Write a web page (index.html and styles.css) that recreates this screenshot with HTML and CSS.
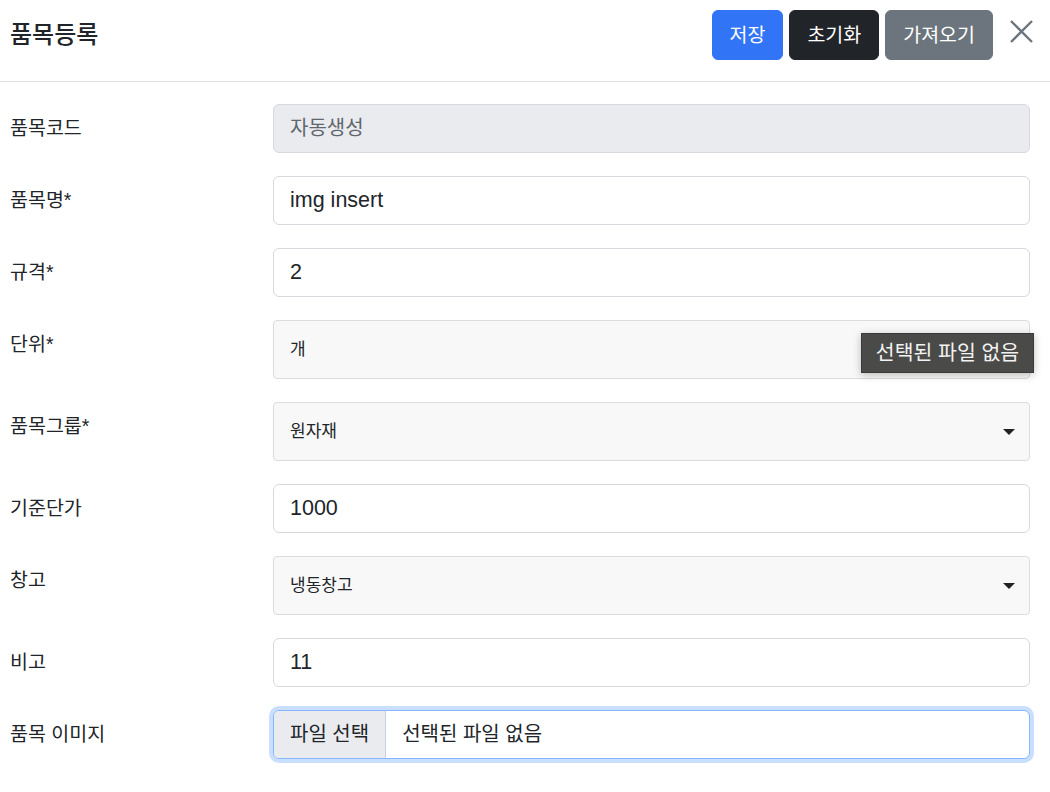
FILE: index.html
```html
<!DOCTYPE html>
<html lang="ko">
<head>
<meta charset="utf-8">
<title>품목등록</title>
<link rel="stylesheet" href="styles.css">
</head>
<body>
<div class="modal">
  <header class="modal-header">
    <h1 class="title">품목등록</h1>
    <div class="actions">
      <button class="btn btn-primary">저장</button>
      <button class="btn btn-dark">초기화</button>
      <button class="btn btn-secondary">가져오기</button>
      <button class="btn-close" aria-label="닫기">
        <svg width="24" height="24" viewBox="0 0 24 24"><path d="M2 1 L23 22 M23 1 L2 22" stroke="#6c757d" stroke-width="2.4" fill="none"/></svg>
      </button>
    </div>
  </header>
  <form class="form">
    <label class="label">품목코드</label>
    <div class="control disabled">자동생성</div>

    <label class="label">품목명*</label>
    <div class="control">img insert</div>

    <label class="label">규격*</label>
    <div class="control">2</div>

    <label class="label">단위*</label>
    <div class="select plain">개</div>

    <label class="label">품목그룹*</label>
    <div class="select">원자재<span class="caret"></span></div>

    <label class="label">기준단가</label>
    <div class="control">1000</div>

    <label class="label">창고</label>
    <div class="select">냉동창고<span class="caret"></span></div>

    <label class="label">비고</label>
    <div class="control">11</div>

    <label class="label">품목 이미지</label>
    <div class="file">
      <span class="file-btn">파일 선택</span>
      <span class="file-name">선택된 파일 없음</span>
    </div>
  </form>
  <div class="tooltip">선택된 파일 없음</div>
</div>
</body>
</html>
```

FILE: styles.css
```css
* { box-sizing: border-box; }
html, body { margin: 0; padding: 0; background: #fff; }
body {
  font-family: "Liberation Sans", "Noto Sans CJK KR", sans-serif;
  color: #212529;
  font-size: 18px;
  width: 1050px;
  height: 792px;
  overflow: hidden;
}
.modal { position: relative; }
.modal-header {
  display: flex;
  justify-content: space-between;
  align-items: flex-start;
  height: 82px;
  padding: 10px 0 0 10px;
  border-bottom: 1px solid #dee2e6;
}
.title {
  margin: 0;
  font-size: 24px;
  font-weight: 500;
  line-height: 50px;
}
.actions { display: flex; align-items: flex-start; gap: 6px; padding-right: 10px; }
.btn {
  font-family: inherit;
  font-size: 19.5px;
  line-height: 27px;
  height: 50px;
  padding: 0 17px;
  border: 1px solid transparent;
  border-radius: 6px;
  color: #fff;
}
.btn-primary { background: #3274f6; border-color: #3274f6; }
.btn-dark { background: #212529; border-color: #212529; }
.btn-secondary { background: #6c757d; border-color: #6c757d; }
.btn-close {
  background: none;
  border: 0;
  padding: 0;
  margin: 9px 6px 0 9px;
  width: 26px;
  height: 26px;
  display: flex;
  align-items: center;
  justify-content: center;
}
.form {
  display: grid;
  grid-template-columns: 263px 757px;
  row-gap: 23px;
  padding: 22px 20px 0 10px;
}
.label {
  padding: 11px 0;
  line-height: 27px;
  font-size: 19.5px;
}
.control {
  height: 49px;
  padding: 10px 16px;
  line-height: 27px;
  font-size: 21.5px;
  border: 1px solid #d6d9dd;
  border-radius: 6px;
  background: #fff;
}
.control.disabled { background: #e9ebef; color: #5f666d; font-size: 20px; }
.select {
  position: relative;
  height: 59px;
  padding: 16px 16px;
  line-height: 25px;
  font-size: 17px;
  border: 1px solid #dcdcdc;
  border-radius: 4px;
  background: #f8f8f8;
}
.caret {
  position: absolute;
  right: 14px;
  top: 26px;
  width: 0;
  height: 0;
  border-left: 6px solid transparent;
  border-right: 6px solid transparent;
  border-top: 6px solid #222;
}
.file {
  display: flex;
  height: 49px;
  border: 1px solid #86b7fe;
  border-radius: 6px;
  box-shadow: 0 0 0 4px rgba(13, 110, 253, 0.22);
  overflow: hidden;
  background: #fff;
  font-size: 20px;
  line-height: 27px;
}
.file-btn {
  padding: 10px 16px;
  background: #e9ebef;
  border-right: 1px solid #c9d3e3;
}
.file-name { padding: 10px 16px; }
.tooltip {
  position: absolute;
  left: 861px;
  top: 333px;
  width: 173px;
  height: 40px;
  background: #4a4a48;
  border: 1px solid #3a3a3a;
  color: #f2f2f2;
  font-size: 20.5px;
  line-height: 38px;
  text-align: center;
  box-shadow: 0 2px 8px rgba(0,0,0,0.25);
}
```
